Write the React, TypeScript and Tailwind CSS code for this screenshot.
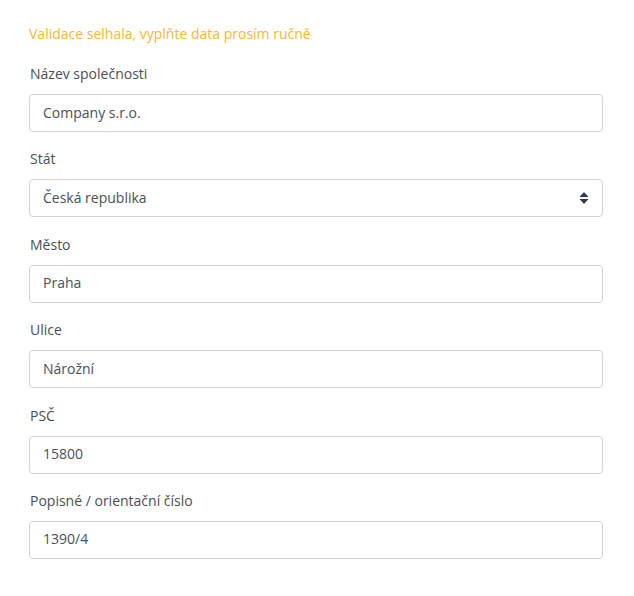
import React from 'react';

const fields = [
  { label: 'Název společnosti', value: 'Company s.r.o.' },
  { label: 'Stát', value: 'Česká republika', select: true },
  { label: 'Město', value: 'Praha' },
  { label: 'Ulice', value: 'Nárožní' },
  { label: 'PSČ', value: '15800' },
  { label: 'Popisné / orientační číslo', value: '1390/4' },
];

const SortArrows: React.FC = () => (
  <svg width="10" height="14" viewBox="0 0 10 14" className="absolute right-[13px] top-1/2 -translate-y-1/2">
    <path d="M5 1 L9.5 6 L0.5 6 Z" fill="#343a40" />
    <path d="M5 13 L9.5 8 L0.5 8 Z" fill="#343a40" />
  </svg>
);

export default function App() {
  return (
    <div
      className="w-[634px] h-[596px] bg-white pt-[23px] pl-[29px] text-[14px] leading-[21px]"
      style={{ fontFamily: '"Open Sans", "Liberation Sans", sans-serif' }}
    >
      <div className="text-[#f7b733] mb-[19px]">Validace selhala, vyplňte data prosím ručně</div>

      {fields.map((f) => (
        <div key={f.label} className="w-[574px] mb-[16.4px]">
          <div className="text-[#4a4f55] pl-px mb-[10px]">{f.label}</div>
          <div className="relative h-[38px] border border-[#ced4da] rounded-[4px] flex items-center px-[13px] pb-[2px] text-[#495057]">
            {f.value}
            {f.select && <SortArrows />}
          </div>
        </div>
      ))}
    </div>
  );
}
